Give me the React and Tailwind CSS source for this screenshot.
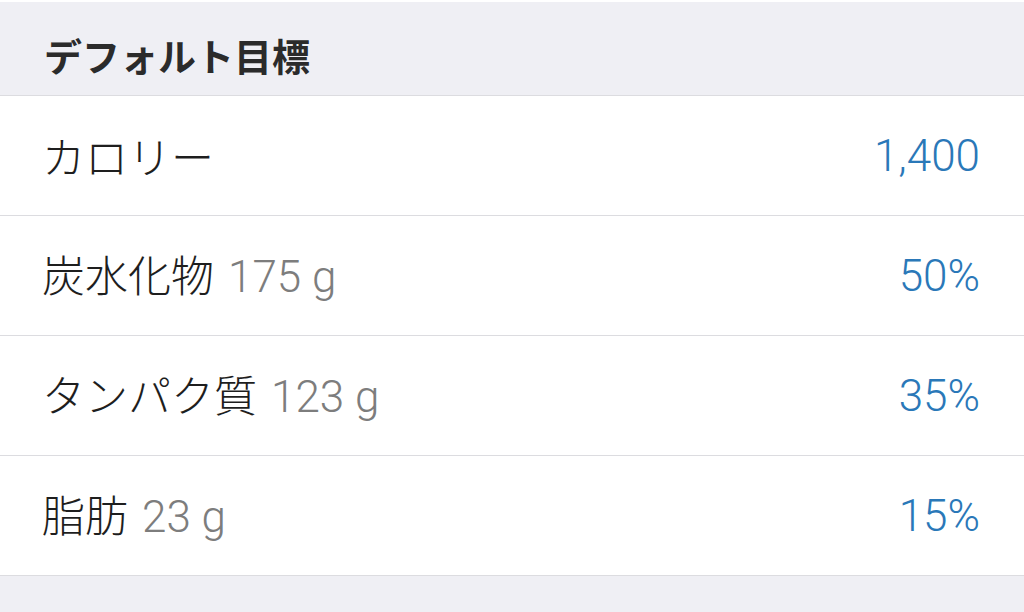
const JP = { fontFamily: '"Noto Sans CJK JP", "Noto Sans", sans-serif' }

const ROWS = [
  { label: 'カロリー', sub: null, value: '1,400' },
  { label: '炭水化物', sub: '175 g', value: '50%' },
  { label: 'タンパク質', sub: '123 g', value: '35%' },
  { label: '脂肪', sub: '23 g', value: '15%' },
]

// ─── One goal row ───────────────────────────────────────────────────────────
function GoalRow({ label, sub, value }) {
  return (
    <div className="h-[120px] flex items-center justify-between pl-[42px] pr-[44px] border-b border-[#dcdce0] bg-white">
      <div className="flex items-baseline gap-[14px]">
        <span className="text-[43px] font-light text-[#1e1e1e] leading-none">{label}</span>
        {sub && (
          <span className="text-[44px] font-light text-[#7d7d7d] leading-none font-['Roboto',sans-serif]">
            {sub}
          </span>
        )}
      </div>
      <span className="text-[44px] font-light text-[#2a78b8] leading-none font-['Roboto',sans-serif]">
        {value}
      </span>
    </div>
  )
}

export default function App() {
  return (
    <div className="w-[1024px] h-[612px] bg-[#efeff4] overflow-hidden" style={JP}>
      <div className="h-[96px] border-t-2 border-white border-b border-b-[#dcdce0] flex items-center pl-[44px] pt-[12px]">
        <h2 className="text-[38px] font-bold text-[#2b2b2b] leading-none">デフォルト目標</h2>
      </div>

      {ROWS.map((r) => (
        <GoalRow key={r.label} {...r} />
      ))}
    </div>
  )
}
